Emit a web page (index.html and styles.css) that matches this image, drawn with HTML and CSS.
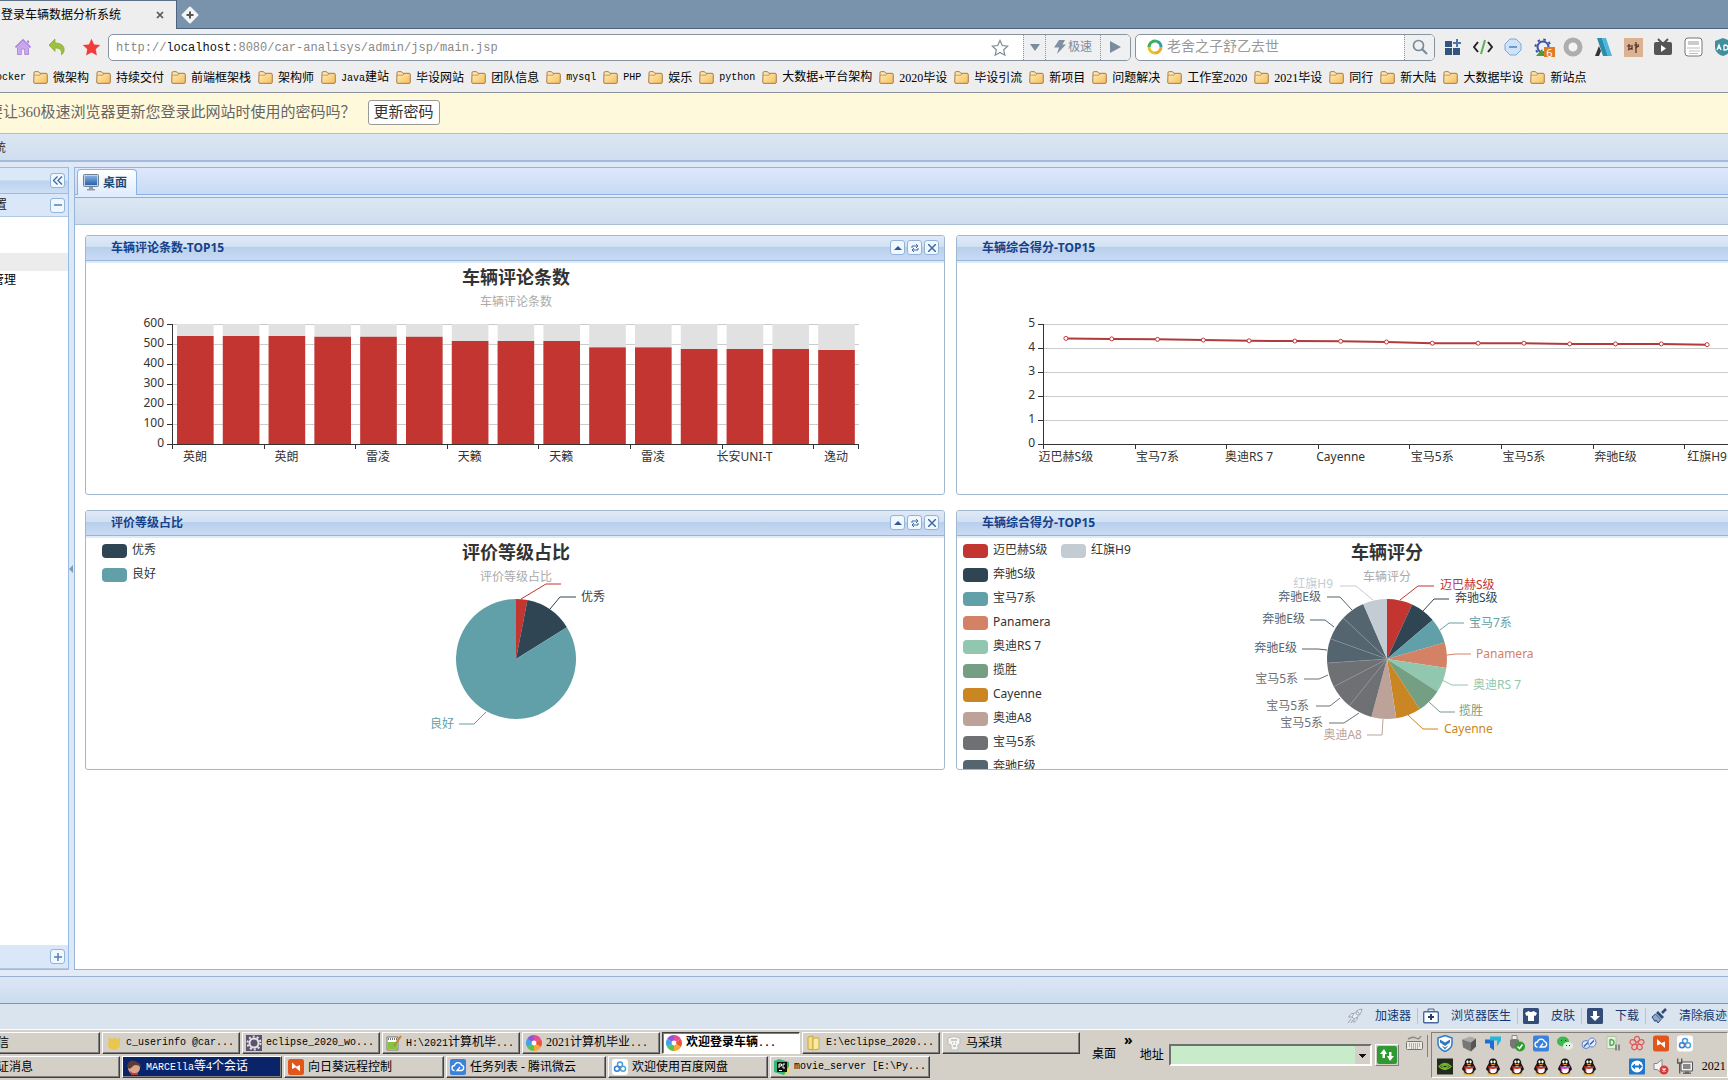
FILE: index.html
```html
<!DOCTYPE html>
<html lang="zh-CN">
<head>
<meta charset="utf-8">
<title>登录车辆数据分析系统</title>
<link rel="stylesheet" href="styles.css">
</head>
<body>
<svg class="defs" aria-hidden="true">
  <defs>
    <linearGradient id="gold" x1="0" y1="0" x2="1" y2="1"><stop offset="0" stop-color="#fff0c0"/><stop offset="1" stop-color="#f5bd5c"/></linearGradient>
    <linearGradient id="screen" x1="0" y1="0" x2="0" y2="1"><stop offset="0" stop-color="#7fb0e0"/><stop offset="1" stop-color="#2a62ac"/></linearGradient>
  </defs>
  <symbol id="folder" viewBox="0 0 16 14"><path d="M1 3V2q0-1.3 1.2-1.3h3.6L7.4 2.500H14q1.300 0 1.300 1.300v8.200q0 1.300-1.300 1.300H2q-1.300 0-1.300-1.300z" fill="url(#gold)" stroke="#a0713c"/><path d="M1 4.500h6.500L9 3" fill="none" stroke="#c89650"/></symbol>
  <symbol id="pinwheel" viewBox="0 0 16 16"><path d="M8 8V0a8 8 0 0 1 6.900 4z" fill="#e84d9a"/><path d="M8 8l6.900-4a8 8 0 0 1 0 8z" fill="#f0553c"/><path d="M8 8l6.900 4A8 8 0 0 1 8 16z" fill="#f7a63a"/><path d="M8 8v8a8 8 0 0 1-6.900-4z" fill="#5dc24b"/><path d="M8 8l-6.900 4a8 8 0 0 1 0-8z" fill="#3aa5e8"/><path d="M8 8L1.100 4A8 8 0 0 1 8 0z" fill="#8a5ad8"/><circle cx="8" cy="8" r="2.400" fill="#fff"/></symbol>
  <symbol id="qq" viewBox="0 0 16 18"><ellipse cx="8" cy="16.300" rx="6" ry="1.600" fill="#e9a21c"/><path d="M8 .5c3 0 4.500 2 4.500 5 0 1 2.800 4 2.800 7l-1.300.8c-1 3-3 3.500-6 3.500s-5-.5-6-3.500L.7 12.500c0-3 2.800-6 2.800-7 0-3 1.500-5 4.500-5z" fill="#161616"/><ellipse cx="8" cy="12.500" rx="4" ry="3.700" fill="#fff"/><ellipse cx="6.400" cy="4" rx="1.200" ry="1.700" fill="#fff"/><ellipse cx="9.600" cy="4" rx="1.200" ry="1.700" fill="#fff"/><path d="M5 6.300h6L8 8z" fill="#f0a020"/><path d="M2.800 8.200q5 2.500 10.400 0v2q-5 2-8 1v3H3.500v-3.500z" fill="var(--scarf,#d8282c)"/></symbol>
  <symbol id="cloud" viewBox="0 0 16 16"><rect width="16" height="16" rx="2" fill="#3c82dc"/><path d="M4.500 11.500a2.500 2.500 0 0 1 0-5 3.600 3.600 0 0 1 7-.3 2.700 2.700 0 0 1 0 5.300H7l3-3.500" fill="none" stroke="#fff" stroke-width="1.300"/></symbol>
  <symbol id="sun" viewBox="0 0 16 16"><rect width="16" height="16" rx="2.500" fill="#e2561c"/><path d="M4 3.500l4.500 4L12 6v6.500L7.500 8.500 4 10z" fill="#fff"/></symbol>
  <symbol id="netdisk" viewBox="0 0 16 16"><rect width="16" height="16" rx="3" fill="#fff"/><g fill="none" stroke-width="1.500"><circle cx="8" cy="5.500" r="2.500" stroke="#4a9be0"/><circle cx="5" cy="9.800" r="2.500" stroke="#2f7fd6"/><circle cx="11" cy="9.800" r="2.500" stroke="#4aa8d6"/></g><circle cx="8" cy="8.500" r="1" fill="#e2505a"/></symbol>
</svg>

<header class="browser">
  <div class="tabstrip">
    <div class="browser-tab"><span>登录车辆数据分析系统</span><button class="bare" aria-label="关闭标签"><svg width="8" height="8" viewBox="0 0 8 8"><path d="M1 1l6 6M7 1L1 7" stroke="#555" stroke-width="1.700"/></svg></button></div>
    <button class="bare new-tab" aria-label="新标签"><svg width="18" height="18" viewBox="0 0 18 18"><path d="M9 1.500L16.500 9 9 16.500 1.500 9z" fill="#f2f4f6" stroke="#f2f4f6" stroke-width="2" stroke-linejoin="round"/><path d="M9 5.500v7M5.500 9h7" stroke="#555" stroke-width="2"/></svg></button>
  </div>
  <div class="navbar">
    <div class="nav-icons">
      <button class="bare" aria-label="主页"><svg width="18" height="18" viewBox="0 0 18 18"><path d="M1.500 9.500L9 2l7.500 7.500" fill="none" stroke="#b087e0" stroke-width="1.800"/><path d="M3.500 10L9 4.500l5.500 5.500v6.500h-3.800V11H7.300v5.500H3.500z" fill="#c9a8ee" stroke="#a67cd8" stroke-width=".8"/><path d="M13 2.500h2v3l-2-1.500z" fill="#a67cd8"/></svg></button>
      <button class="bare" aria-label="后退"><svg width="18" height="18" viewBox="0 0 18 18"><path d="M7 1v4c6 0 10 3 9 8-.4 2-1.500 3-2.500 3.800C14 12 12 10 7 10v3.500L1 7z" fill="#9cc23c" stroke="#7fa62c" stroke-width=".7"/></svg></button>
      <button class="bare" aria-label="收藏夹"><svg width="19" height="18" viewBox="0 0 19 18"><path d="M9.500.8l2.600 5.600 6.100.7-4.500 4.200 1.200 6.100-5.400-3-5.400 3 1.200-6.100L.8 7.100l6.100-.7z" fill="#f23c3c"/></svg></button>
    </div>
    <div class="urlbox">
      <div class="url" role="textbox" aria-label="网址">http://<b>localhost</b>:8080/car-analisys/admin/jsp/main.jsp</div>
      <button class="bare fav" aria-label="加入收藏"><svg width="18" height="18" viewBox="0 0 18 18"><path d="M9 1.500l2.300 5 5.400.6-4 3.700 1.100 5.400L9 13.500l-4.800 2.700 1.100-5.400-4-3.700 5.400-.6z" fill="#fff" stroke="#7c8894" stroke-width="1.200"/></svg></button>
      <button class="seg seg-s" aria-label="历史"><svg width="10" height="8" viewBox="0 0 10 8"><path d="M0 1h10L5 8z" fill="#7b8c9e"/></svg></button>
      <button class="seg seg-m"><svg width="12" height="14" viewBox="0 0 12 14"><path d="M5 0h6L8.500 4.500H12L3 14l2-6.500H0z" fill="#8090a2"/></svg>极速</button>
      <button class="seg seg-g" aria-label="转到"><svg width="11" height="12" viewBox="0 0 11 12"><path d="M0 0l11 6-11 6z" fill="#7b8c9e"/></svg></button>
    </div>
    <div class="searchbox">
      <svg width="16" height="16" viewBox="0 0 16 16"><g fill="none" stroke-width="3"><path d="M2 8a6 6 0 0 1 8-5.600" stroke="#3fae54"/><path d="M10 2.400A6 6 0 0 1 14 8" stroke="#2f9fb0"/><path d="M14 8a6 6 0 0 1-6 6" stroke="#f4a62a"/><path d="M8 14a6 6 0 0 1-6-6" stroke="#e6c52c"/></g></svg>
      <input type="text" aria-label="搜索" placeholder="老舍之子舒乙去世">
      <button class="seg seg-q" aria-label="搜索"><svg width="16" height="16" viewBox="0 0 16 16"><circle cx="6.500" cy="6.500" r="5" fill="none" stroke="#7d8a98" stroke-width="1.700"/><path d="M10 10l5 5" stroke="#7d8a98" stroke-width="2.200"/></svg></button>
    </div>
    <div class="extensions">
      <svg width="18" height="18" viewBox="0 0 18 18"><path d="M1 3h7v6H1zM1 10h7v7H1zM9 10h7v7H9z" fill="#34557e"/><path d="M13 1v8M9 5h8" stroke="#4d75a8" stroke-width="2"/></svg>
      <svg width="20" height="18" viewBox="0 0 20 18"><path d="M5 4L1 9l4 5M15 4l4 5-4 5" fill="none" stroke="#222" stroke-width="2"/><path d="M12 2L8 16" stroke="#5eae5a" stroke-width="2"/></svg>
      <svg width="18" height="18" viewBox="0 0 18 18"><path d="M6 1h6l5 5v6l-5 5H6l-5-5V6z" fill="#cfe3f8" stroke="#7ba8dc"/><path d="M5 9h8" stroke="#7099cc" stroke-width="2"/></svg>
      <span class="badged"><svg width="18" height="18" viewBox="0 0 18 18"><circle cx="9" cy="9" r="5.500" fill="none" stroke="#3a53a4" stroke-width="2"/><circle cx="9" cy="9" r="7.500" fill="none" stroke="#3a53a4" stroke-width="2" stroke-dasharray="2.500 3.400"/><path d="M2 18l6-7 3 7z" fill="#4c9c3c"/></svg><span class="badge">6</span></span>
      <svg width="20" height="20" viewBox="0 0 20 20"><circle cx="10" cy="10" r="7" fill="#f4f4f4" stroke="#adadad" stroke-width="5"/></svg>
      <svg width="19" height="19" viewBox="0 0 19 19"><path d="M1 18l4-10 2 5-2 5z" fill="#333"/><path d="M3 0h5l6 18H9z" fill="#2d8ca8"/><path d="M8 0h4l6 18h-4z" fill="#4cb6de"/></svg>
      <svg width="19" height="19" viewBox="0 0 19 19"><path d="M0 0h19v19H0z" fill="#dcb392"/><path d="M3 8h4M5 6v6M4 12l4-2M8 7v5M12 4v11M10 7h5M11 10l4-2" stroke="#503020" stroke-width="1.200"/></svg>
      <svg width="20" height="18" viewBox="0 0 20 18"><path d="M5 1l4 4M15 1l-4 4" stroke="#555" stroke-width="2"/><rect x="1" y="4" width="18" height="13" rx="2" fill="#555"/><path d="M8 7l5 3.500L8 14z" fill="#fff"/></svg>
      <svg width="19" height="20" viewBox="0 0 19 20"><rect x="1" y="1" width="17" height="18" rx="3" fill="#fff" stroke="#777"/><path d="M4 5h11M4 7h11" stroke="#999"/><path d="M3 11h13M5 14h11M5 16.500h9" stroke="#bbb"/></svg>
      <svg width="18" height="18" viewBox="0 0 18 18"><path d="M9 0l8 3v6c0 5-4 8-8 9-4-1-8-4-8-9V3z" fill="#3f8f9c"/><path d="M3 12l2-5 2 5M4 10h2M10 7v5q4 0 4-2.500T10 7" fill="none" stroke="#fff" stroke-width="1.300"/></svg>
    </div>
  </div>
  <nav class="bookmarks" aria-label="书签">
    <a href="#"><span class="lat">ocker</span></a>
    <a href="#"><svg><use href="#folder"/></svg>微架构</a>
    <a href="#"><svg><use href="#folder"/></svg>持续交付</a>
    <a href="#"><svg><use href="#folder"/></svg>前端框架栈</a>
    <a href="#"><svg><use href="#folder"/></svg>架构师</a>
    <a href="#"><svg><use href="#folder"/></svg><span><span class="lat">Java</span>建站</span></a>
    <a href="#"><svg><use href="#folder"/></svg>毕设网站</a>
    <a href="#"><svg><use href="#folder"/></svg>团队信息</a>
    <a href="#"><svg><use href="#folder"/></svg><span class="lat">mysql</span></a>
    <a href="#"><svg><use href="#folder"/></svg><span class="lat">PHP</span></a>
    <a href="#"><svg><use href="#folder"/></svg>娱乐</a>
    <a href="#"><svg><use href="#folder"/></svg><span class="lat">python</span></a>
    <a href="#"><svg><use href="#folder"/></svg><span>大数据<span class="lat">+</span>平台架构</span></a>
    <a href="#"><svg><use href="#folder"/></svg>2020毕设</a>
    <a href="#"><svg><use href="#folder"/></svg>毕设引流</a>
    <a href="#"><svg><use href="#folder"/></svg>新项目</a>
    <a href="#"><svg><use href="#folder"/></svg>问题解决</a>
    <a href="#"><svg><use href="#folder"/></svg>工作室2020</a>
    <a href="#"><svg><use href="#folder"/></svg>2021毕设</a>
    <a href="#"><svg><use href="#folder"/></svg>同行</a>
    <a href="#"><svg><use href="#folder"/></svg>新大陆</a>
    <a href="#"><svg><use href="#folder"/></svg>大数据毕设</a>
    <a href="#"><svg><use href="#folder"/></svg>新站点</a>
  </nav>
  <div class="infobar"><span>要让360极速浏览器更新您登录此网站时使用的密码吗？</span><button>更新密码</button></div>
</header>

<div class="app-header"><span>统</span></div>
<main class="workspace">
  <aside class="sidebar">
    <div class="side-title"><button class="tool" aria-label="收起"><svg width="10" height="9" viewBox="0 0 10 9"><path d="M4.500.5l-4 4 4 4M9 .5l-4 4 4 4" fill="none" stroke="#3f6ba5" stroke-width="1.300"/></svg></button></div>
    <div class="side-section"><span>置</span><button class="tool" aria-label="折叠"><svg width="8" height="8" viewBox="0 0 8 8"><path d="M0 4h8" stroke="#5680b5" stroke-width="1.500"/></svg></button></div>
    <ul class="tree"><li class="selected"></li><li>管理</li></ul>
    <div class="side-section side-foot"><button class="tool" aria-label="展开"><svg width="8" height="8" viewBox="0 0 8 8"><path d="M0 4h8M4 0v8" stroke="#5680b5" stroke-width="1.500"/></svg></button></div>
  </aside>
  <div class="splitter"><svg width="4" height="8" viewBox="0 0 4 8"><path d="M4 0v8L0 4z" fill="#7d9cba"/></svg></div>
  <section class="content">
    <div class="content-tabs"><button class="content-tab"><svg width="16" height="17" viewBox="0 0 16 17"><rect x=".5" y=".5" width="15" height="12" rx="1" fill="#c9d2dc" stroke="#6f7f92"/><path d="M2 2h12v9H2z" fill="url(#screen)"/><path d="M6 13h4v2h2v1.500H4V15h2z" fill="#8f9aa8"/></svg>桌面</button></div>
    <div class="content-toolbar"></div>
    <div class="portal">
      <article class="panel"><h2><span>车辆评论条数-TOP15</span></h2><div class="chart" id="bar"></div></article>
      <article class="panel"><h2><span>车辆综合得分-TOP15</span></h2><div class="chart" id="line"></div></article>
      <article class="panel"><h2><span>评价等级占比</span></h2><div class="chart" id="grade"></div></article>
      <article class="panel"><h2><span>车辆综合得分-TOP15</span></h2><div class="chart" id="score"></div></article>
    </div>
  </section>
</main>
<div class="app-footer"></div>

<footer class="statusbar">
  <a href="#"><svg width="16" height="16" viewBox="0 0 16 16"><path d="M5 9Q8 2 15 1q-1 7-8 10zM5 9L1.500 9l3-3.500L7 5.500M7 11v3.500l3-3 .5-2.500M4 11l-3 4M6 12l-2 3" fill="#eceff2" stroke="#9aa4b0"/><circle cx="10.500" cy="5.500" r="1.500" fill="none" stroke="#9aa4b0"/></svg>加速器</a>
  <a href="#"><svg width="16" height="16" viewBox="0 0 16 16"><rect x=".7" y="3.700" width="14.600" height="11" rx="1" fill="#fff" stroke="#48689c" stroke-width="1.400"/><path d="M5 3.500V1h6v2.500" fill="none" stroke="#48689c"/><path d="M8 6v6M5 9h6" stroke="#263e68" stroke-width="2"/></svg>浏览器医生</a>
  <a href="#"><svg width="16" height="16" viewBox="0 0 16 16"><rect width="16" height="16" rx="1.500" fill="#344c78"/><path d="M5.500 3Q8 5 10.500 3L14 5l-1.500 3L11 7.500V13H5V7.500L3.500 8 2 5z" fill="#fff"/></svg>皮肤</a>
  <a href="#"><svg width="16" height="16" viewBox="0 0 16 16"><rect width="16" height="16" rx="1.500" fill="#344c78"/><path d="M6 3h4v5h3l-5 5-5-5h3z" fill="#fff"/></svg>下载</a>
  <a href="#"><svg width="16" height="16" viewBox="0 0 16 16"><path d="M15 1l-4 4" stroke="#304a78" stroke-width="2.500"/><path d="M7 3l6 6-2 2-6-6z" fill="#304a78"/><path d="M4.500 6L10 11.500 7 15 5 12l-1 1.500L1 9z" fill="#8fa8cc" stroke="#304a78"/></svg>清除痕迹</a>
</footer>

<footer class="taskbar">
  <div class="tasks">
    <div class="task-row">
      <button class="task first"><span>信</span></button>
      <button class="task"><svg viewBox="0 0 16 16"><path d="M3 2l3 2 3-2 2 2 3-1v8q-2 4-6 4t-6-4z" fill="#ecc53a" opacity=".85"/></svg><span class="lat">c_userinfo @car...</span></button>
      <button class="task"><svg viewBox="0 0 16 16"><path d="M0 0h16v16H0z" fill="#5b5470"/><circle cx="8" cy="8" r="4.500" fill="#5b5470" stroke="#e4e4e4" stroke-width="2"/><circle cx="8" cy="8" r="6.500" fill="none" stroke="#e4e4e4" stroke-width="2" stroke-dasharray="2 2.080"/></svg><span class="lat">eclipse_2020_wo...</span></button>
      <button class="task"><svg viewBox="0 0 16 16"><path d="M1 2h11v13H1z" fill="#fff" stroke="#777"/><path d="M1.500 7h10v7.500h-10z" fill="#85c440"/><path d="M2 4h9" stroke="#777" stroke-dasharray="1 1" stroke-width="2"/><path d="M15 1L8 11" stroke="#c48428" stroke-width="2"/></svg><span><span class="lat">H:\2021</span>计算机毕<span class="lat">...</span></span></button>
      <button class="task"><svg><use href="#pinwheel"/></svg><span>2021计算机毕业<span class="lat">...</span></span></button>
      <button class="task pressed"><svg><use href="#pinwheel"/></svg><span>欢迎登录车辆<span class="lat">...</span></span></button>
      <button class="task"><svg viewBox="0 0 16 16"><path d="M2 2l5-1v14l-5-1z" fill="#f4df86" stroke="#c9a840"/><path d="M7 3h6v11l-6 1z" fill="#f8eaa6" stroke="#c9a840"/></svg><span class="lat">E:\eclipse_2020...</span></button>
      <button class="task"><svg viewBox="0 0 16 16"><path d="M2 3q6-3 12 0v6l-2 1v5H5v-5L2 9z" fill="#f4f4f2" stroke="#bbb"/><path d="M5 5h6M6 8h1M9 8h1M7 11h3" stroke="#999"/></svg><span>马采琪</span></button>
    </div>
    <div class="task-row wide">
      <button class="task first"><span>证消息</span></button>
      <button class="task active"><svg viewBox="0 0 16 16"><circle cx="8" cy="9" r="6" fill="#d9a38c"/><path d="M1 7Q3 0 9 2t6 6Q9 4 6 8t-5-1z" fill="#5a3c34"/><path d="M4 12q4 4 8 1v3H5z" fill="#b83c3c"/></svg><span><span class="lat">MARCElla</span>等4个会话</span></button>
      <button class="task"><svg><use href="#sun"/></svg><span>向日葵远程控制</span></button>
      <button class="task"><svg><use href="#cloud"/></svg><span>任务列表 - 腾讯微云</span></button>
      <button class="task"><svg><use href="#netdisk"/></svg><span>欢迎使用百度网盘</span></button>
      <button class="task"><svg viewBox="0 0 16 16"><path d="M0 2l5-2 10 3v10l-5 3L0 13z" fill="#34b878"/><path d="M10 16l6-3-1-6z" fill="#e8e04c"/><path d="M3 3h10v10H3z" fill="#111"/><path d="M5 5v4M5 5h2.500v2H5M11 5H9v4h2M5 11.500h3" stroke="#fff" fill="none"/></svg><span class="lat">movie_server [E:\Py...</span></button>
    </div>
  </div>
  <div class="deskbar"><span>桌面</span><span class="more">»</span></div>
  <label class="address"><span>地址</span><select><option></option></select></label>
  <button class="go" aria-label="刷新"><svg width="20" height="18" viewBox="0 0 20 18"><rect width="20" height="18" rx="2" fill="#2f9a34"/><path d="M7 3L3 8h2.500v4h2.500V8H10L7 3zM13 15l4-5h-2.500V6H12v4H10z" fill="#fff"/></svg></button>
  <div class="keyboard"><svg width="17" height="16" viewBox="0 0 17 16"><path d="M2 4q5-3 8-1t5-2" fill="none" stroke="#8d8a84" stroke-width="1.500"/><rect x=".5" y="6.500" width="16" height="8" rx="1" fill="#eceae4" stroke="#77746e"/><path d="M3 9h11M3 11h11M5 13h7" stroke="#77746e" stroke-dasharray="1 1"/></svg></div>
  <div class="tray">
    <div class="tray-row">
      <svg viewBox="0 0 16 16"><path d="M8 0l7 2.500V8q0 5-7 8-7-3-7-8V2.500z" fill="#fff" stroke="#2f7ac4" stroke-width="1.500"/><path d="M3 4l5 3 5-3v3l-5 3.500L3 7zM4.500 10L8 12l3.500-2L8 14z" fill="#2f7ac4"/></svg>
      <svg viewBox="0 0 16 16"><path d="M1 4l8-3 6 2-5 4z" fill="#aaa"/><path d="M1 4l9 3v9l-8-4z" fill="#777"/><path d="M10 7l5-4v8l-5 5z" fill="#555"/></svg>
      <svg viewBox="0 0 16 16"><path d="M0 4h9v11l-4-3V8H0z" fill="#1c6ed0"/><path d="M5 1h11v4l-4 6V5H5z" fill="#25b6dc"/></svg>
      <svg viewBox="0 0 16 16"><path d="M3 0h5v4H3z" fill="#eee" stroke="#888"/><path d="M1 4h9v6l-2 3H3l-2-3z" fill="#777"/><circle cx="11" cy="11" r="5" fill="#2f9c2c"/><path d="M8.500 11l2 2 3-4" stroke="#fff" stroke-width="1.500" fill="none"/></svg>
      <svg><use href="#cloud"/></svg>
      <svg viewBox="0 0 16 16"><ellipse cx="6" cy="6" rx="6" ry="5" fill="#3cb84c"/><ellipse cx="11" cy="10.500" rx="5" ry="4" fill="#e6efe4"/><path d="M4 5h1M8 5h1M9 10h1M12 10h1" stroke="#333"/></svg>
      <svg viewBox="0 0 16 16"><ellipse cx="5" cy="9" rx="4" ry="4" fill="#dce8fa" stroke="#5a82c8"/><ellipse cx="11" cy="7" rx="4" ry="4.500" fill="#e6eefc" stroke="#5a82c8"/><path d="M3 11l4-4M9 9l4-4" stroke="#3a62b0" stroke-width="1.500"/></svg>
      <svg viewBox="0 0 16 16"><path d="M2 1h9v12H2z" fill="#e6f0e0" stroke="#a8c8a0"/><path d="M5 4v6M5 4q4 0 4 3t-4 3" fill="none" stroke="#58a858" stroke-width="1.500"/><path d="M11 9v6M14 9v6" stroke="#888" stroke-width="2"/></svg>
      <svg viewBox="0 0 16 16"><g fill="none" stroke="#e05858" stroke-width="1.200"><ellipse cx="8" cy="3.800" rx="2.500" ry="3"/><ellipse cx="8" cy="3.800" rx="2.500" ry="3" transform="rotate(72 8 8)"/><ellipse cx="8" cy="3.800" rx="2.500" ry="3" transform="rotate(144 8 8)"/><ellipse cx="8" cy="3.800" rx="2.500" ry="3" transform="rotate(216 8 8)"/><ellipse cx="8" cy="3.800" rx="2.500" ry="3" transform="rotate(288 8 8)"/></g></svg>
      <svg><use href="#sun"/></svg>
      <svg><use href="#netdisk"/></svg>
    </div>
    <div class="tray-row">
      <svg viewBox="0 0 16 16"><path d="M0 0h16v16H0z" fill="#222c1c"/><path d="M2 8q6-6 12 0-6 6-12 0zM5 8q3-3 6 0-3 3-6 0z" fill="none" stroke="#76b82c" stroke-width="1.300"/></svg>
      <svg><use href="#qq"/></svg><svg><use href="#qq"/></svg><svg><use href="#qq"/></svg><svg><use href="#qq"/></svg><svg class="pink"><use href="#qq"/></svg><svg><use href="#qq"/></svg>
      <svg></svg>
      <svg viewBox="0 0 16 16"><rect width="16" height="16" rx="1" fill="#1c78cc"/><circle cx="8" cy="8" r="6" fill="#fff"/><path d="M2.500 8l3.500-3v2h4V5l3.500 3-3.500 3V9H6v2z" fill="#1c78cc"/></svg>
      <svg viewBox="0 0 16 16"><path d="M1 5h3l5-4v14l-5-4H1z" fill="#f4f4f4" stroke="#888"/><circle cx="11" cy="11.500" r="4.500" fill="#d83c38"/><path d="M9.500 10l3 3M12.500 10l-3 3" stroke="#fff" stroke-width="1.300"/></svg>
      <svg viewBox="0 0 16 16"><path d="M4 3.500h11.500v9H4z" fill="#f0f0ee" stroke="#555"/><path d="M6 5.500h7.500v5H6z" fill="#888"/><path d="M8 13h4v1h2v1.500H6V14h2z" fill="#666"/><path d="M.7 0v4.500h4V0M2.700 4.500V15" fill="none" stroke="#555" stroke-width="1.300"/></svg>
      <time>2021</time>
    </div>
  </div>
</footer>
<script src="charts.js"></script>
</body>
</html>
```

FILE: styles.css
```css
* { box-sizing: border-box; }
body {
  margin: 0;
  min-height: 100vh;
  display: flex;
  flex-direction: column;
  overflow: hidden;
  background: #dfe8f6;
  color: #000;
  font: 12px/16px "Liberation Serif", "Noto Sans CJK SC", sans-serif;
  white-space: nowrap;
}
button, input, select { font: inherit; color: inherit; margin: 0; padding: 0; }
svg { display: block; flex: none; }
a { color: inherit; text-decoration: none; }
.defs { width: 0; height: 0; position: absolute; }
.bare { border: 0; background: none; display: flex; }
.lat { font-family: "Liberation Mono", monospace; font-size: 10px; }

/* browser chrome */
.browser { background: #eee; }
.tabstrip { display: flex; height: 29px; background: #7893ab; border-bottom: 1px solid #4d6380; }
.browser-tab { width: 177px; height: 29px; padding: 0 12px 0 1px; display: flex; align-items: center; justify-content: space-between; background: #eee; border-top: 1px solid #5c7088; border-right: 1px solid #4d6380; }
.new-tab { padding: 6px 4px; }
.navbar { display: flex; align-items: center; height: 36px; }
.nav-icons { display: flex; gap: 16px; width: 108px; padding-left: 14px; flex: none; }
.urlbox, .searchbox { display: flex; align-items: stretch; height: 27px; border: 1px solid #8593a2; border-radius: 5px; background: #fff; overflow: hidden; }
.urlbox { flex: 1; margin-right: 4px; }
.url { flex: 1; padding-left: 7px; color: #888; font: 12px/27px "Liberation Mono", monospace; }
.url b { color: #111; font-weight: 400; }
.fav { padding: 4px 14px 0 0; }
.seg { display: flex; align-items: center; justify-content: center; gap: 2px; border: 0; border-left: 1px dotted #8593a2; background: #eef0f2; color: #7b8c9e; }
.seg-s { width: 22px; }
.seg-m { width: 55px; }
.seg-g, .seg-q { width: 30px; }
.searchbox { width: 300px; flex: none; align-items: center; padding-left: 11px; }
.searchbox .seg { align-self: stretch; }
.searchbox input { flex: 1; min-width: 0; height: 25px; border: 0; padding-left: 4px; font-size: 14px; background: none; }
.searchbox input::placeholder { color: #999; opacity: 1; }
.extensions { flex: none; width: 293px; padding-left: 3px; display: grid; grid-template-columns: repeat(10, 30px); justify-items: center; align-items: center; overflow: hidden; }
.badged { position: relative; }
.badge { position: absolute; left: 10px; top: 9px; width: 11px; height: 12px; background: #e07c24; color: #fff; font: 11px/12px "Noto Sans", sans-serif; text-align: center; }
.bookmarks { display: flex; align-items: center; gap: 7px; height: 28px; margin-left: -4px; border-bottom: 1px solid #8b9299; overflow: hidden; padding-bottom: 2px; }
.bookmarks a { display: flex; align-items: center; gap: 5px; flex: none; }
.bookmarks svg { width: 15px; height: 13px; }
.infobar { display: flex; align-items: center; gap: 12px; height: 40px; padding-bottom: 2px; background: #fff9dc; color: #666; font-size: 15px; line-height: 20px; }
.infobar span { margin-left: -12px; }
.infobar button { height: 25px; padding: 0 5px; border: 1px solid #999; border-radius: 3px; background: #fff; color: #333; line-height: 20px; }

/* application frame */
.app-header { height: 29px; border-top: 1px solid #a9bfd3; border-bottom: 2px solid #a3bad9; background: linear-gradient(#dbe6f2, #cfdef0); padding: 6px 0; overflow: hidden; }
.app-header span { margin-left: -6px; color: #333; }
.workspace { flex: 1; display: flex; padding-top: 5px; min-height: 0; background: #dfe8f6; }
.sidebar { width: 69px; display: flex; flex-direction: column; border: 1px solid #99bbe8; border-left: 0; background: #fff; overflow: hidden; }
.side-title { display: flex; align-items: center; justify-content: flex-end; height: 26px; padding-right: 3px; border-bottom: 1px solid #99bbe8; background: linear-gradient(#dbe8f7 0 48%, #bcd2ee 52%, #cddff5); }
.side-section { display: flex; align-items: center; justify-content: space-between; height: 23px; padding-right: 3px; border-bottom: 1px solid #b3c9e3; background: #d9e7f8; }
.side-section span { margin-left: -5px; color: #222; }
.side-foot { justify-content: flex-end; height: 24px; }
.tool { width: 15px; height: 15px; display: flex; align-items: center; justify-content: center; border: 1px solid #94b3d8; border-radius: 3px; background: #f0f7ff; }
.tree { flex: 1; margin: 0; padding: 36px 0 0; list-style: none; }
.tree li { height: 18px; line-height: 18px; margin-left: -8px; }
.tree .selected { background: #ececec; }
.splitter { width: 5px; display: flex; align-items: center; background: #dbe9f7; }
.content { flex: 1; min-width: 0; border: 1px solid #99b4d6; border-right: 0; background: #fff; overflow: hidden; }
.content-tabs { height: 29px; padding: 1px 2px 0; background: linear-gradient(#dde8fb, #c9daf4 26px, #8db2e3 26px, #8db2e3 27px, #deecfd 27px); }
.content-tab { width: 60px; height: 26px; display: flex; align-items: center; gap: 4px; padding: 0 5px; border: 1px solid #8db2e3; border-bottom: 0; border-radius: 4px 4px 0 0; background: linear-gradient(#fff, #deecfd); color: #1c4a78; font-weight: 700; }
.content-toolbar { height: 28px; border-top: 1px solid #92afcf; border-bottom: 1px solid #a9bfd3; background: linear-gradient(#dce7f3, #cddcee); }
.portal { display: grid; grid-template-columns: 1fr 1fr; gap: 15px 11px; width: calc(100% + 88px); padding: 10px 0 0 10px; }
.panel { min-width: 0; height: 260px; display: flex; flex-direction: column; border: 1px solid #a2b8cf; border-radius: 3px; overflow: hidden; }
.panel h2 { margin: 0; flex: none; height: 27px; display: flex; align-items: center; justify-content: space-between; padding: 0 5px 2px 25px; border-bottom: 2px solid #dfebf9; box-shadow: inset 0 -1px #99b4d6; background: linear-gradient(#dfeaf7, #d0e0f3 44%, #b8cfec 46%, #cbdcf4); color: #15428b; font: 700 12px/16px "Noto Sans", "Noto Sans CJK SC", sans-serif; }
.panel-tools { display: flex; gap: 2px; }
.chart { flex: 1; min-height: 0; overflow: hidden; }
.chart svg { margin: 0 auto; }
.chart text { font-family: "Noto Sans", "Noto Sans CJK SC", sans-serif; font-size: 12px; fill: #333; }
.chart .title { font-size: 18px; font-weight: 700; }
.chart .subtitle { fill: #aaa; }
.app-footer { height: 34px; border-bottom: 1px solid #7f93b2; background: linear-gradient(#e3ecf6 6px, #99b0cf 6px, #99b0cf 7px, #dce7f5 7px, #cbdcef); }

/* browser status bar */
.statusbar { display: flex; justify-content: flex-end; align-items: center; height: 25px; padding-bottom: 2px; background: #d9e4ee; color: #17366e; }
.statusbar a { display: flex; align-items: center; gap: 12px; padding: 0 6px 0 5px; }
.statusbar a + a { border-left: 1px solid #b5c3d2; }
.statusbar a:last-child { padding-right: 1px; }

/* desktop task bar */
.taskbar { display: flex; height: 51px; padding-top: 2px; border-top: 1px solid #fff; background: #d4d0c8; overflow: hidden; }
.tasks { width: 1080px; flex: none; display: flex; flex-direction: column; gap: 2px; }
.task-row { display: flex; gap: 2px; }
.task { width: 138px; height: 22px; flex: none; display: flex; align-items: center; gap: 4px; padding: 0 3px; overflow: hidden; border: 1px solid; border-color: #fff #404040 #404040 #fff; box-shadow: inset -1px -1px #808080; background: #d4d0c8; }
.task svg { width: 16px; height: 16px; }
.wide .task { width: 160px; }
.task-row .first { width: 100px; padding: 0; border-left: 0; }
.wide .first { width: 120px; }
.first span { margin-left: -3px; }
.task.pressed { border-color: #404040 #fff #fff #404040; box-shadow: inset 1px 1px #808080; background: #fff; font-weight: 700; }
.task.active { background: #0a246a; color: #fff; }
.deskbar { display: flex; padding: 14px 0 0 12px; }
.more { font: 700 14px/16px "Noto Sans", sans-serif; margin: -14px 0 0 8px; }
.address { display: flex; gap: 5px; margin-left: 7px; padding-top: 12px; }
.address span { padding-top: 3px; }
.address select { width: 203px; height: 22px; appearance: none; border: 2px solid; border-color: #707070 #fff #fff #707070; border-radius: 0; background: linear-gradient(#111, #111) right 4px top 8px / 7px 1px no-repeat, linear-gradient(#111, #111) right 5px top 9px / 5px 1px no-repeat, linear-gradient(#111, #111) right 6px top 10px / 3px 1px no-repeat, linear-gradient(#111, #111) right 7px top 11px / 1px 1px no-repeat, linear-gradient(#d4d0c8, #d4d0c8) right / 15px 100% no-repeat, #c8ebca; }
.go { height: 22px; margin: 12px 0 0 3px; padding: 1px; border: 1px solid; border-color: #fff #808080 #808080 #fff; background: #d4d0c8; }
.keyboard { margin: 3px 0 0 7px; height: 22px; padding-right: 4px; border-right: 1px solid #808080; }
.tray { flex: 1; min-width: 0; height: 46px; margin-left: 3px; padding: 2px 0 0 5px; display: flex; flex-direction: column; gap: 6px; border: 1px solid; border-color: #808080 #fff #fff #808080; overflow: hidden; }
.tray-row { display: flex; gap: 8px; }
.tray svg { width: 16px; height: 17px; }
.tray time { margin-left: 1px; }
.pink { --scarf: #e838c8; }
```

FILE: charts.js
```js
const NS = 'http://www.w3.org/2000/svg';
const W = 860, H = 232, LEFT = 86, RIGHT = 773, TOP = 61, BASE = 181, N = 15;
const STEP = (RIGHT - LEFT) / N;

function canvas(id) {
  const svg = document.createElementNS(NS, 'svg');
  svg.setAttribute('width', W);
  svg.setAttribute('height', H);
  document.getElementById(id).append(svg);
  return svg;
}
function add(svg, name, attrs, text) {
  const el = document.createElementNS(NS, name);
  for (const key in attrs) el.setAttribute(key, attrs[key]);
  if (text !== undefined) el.textContent = text;
  svg.append(el);
}
function label(svg, x, y, text, anchor = 'middle', fill) {
  add(svg, 'text', { x, y: y + 4, 'text-anchor': anchor, ...(fill && { style: `fill:${fill}` }) }, text);
}
function heading(svg, title, subtitle) {
  add(svg, 'text', { x: 430, y: 21, 'text-anchor': 'middle', class: 'title' }, title);
  add(svg, 'text', { x: 430, y: 43, 'text-anchor': 'middle', class: 'subtitle' }, subtitle);
}
function rule(svg, x1, y1, x2, y2, stroke) {
  add(svg, 'path', { d: `M${x1} ${y1}L${x2} ${y2}`, stroke, 'shape-rendering': 'crispEdges' });
}
function gridLines(svg, max, unit) {
  for (let v = unit; v <= max; v += unit) {
    const y = BASE - (BASE - TOP) * v / max + 0.5;
    rule(svg, LEFT, y, RIGHT, y, '#ccc');
  }
}
function axes(svg, max, unit, names) {
  for (let v = 0; v <= max; v += unit) {
    const y = BASE - (BASE - TOP) * v / max;
    rule(svg, LEFT - 5, y + 0.5, LEFT, y + 0.5, '#333');
    label(svg, LEFT - 8, y - 1, v, 'end');
  }
  rule(svg, LEFT + 0.5, TOP, LEFT + 0.5, BASE, '#333');
  rule(svg, LEFT, BASE + 0.5, RIGHT, BASE + 0.5, '#333');
  names.forEach((name, i) => {
    const x = Math.round(LEFT + i * 2 * STEP) + 0.5;
    rule(svg, x, BASE, x, BASE + 5, '#333');
    label(svg, LEFT + (i * 2 + 0.5) * STEP, BASE + 13, name);
  });
  rule(svg, RIGHT - 0.5, BASE, RIGHT - 0.5, BASE + 5, '#333');
}
function pie(svg, slices) {
  const total = slices.reduce((sum, s) => sum + s.value, 0);
  const point = a => `${430 + 60 * Math.sin(a)} ${121 - 60 * Math.cos(a)}`;
  let from = 0;
  for (const s of slices) {
    const to = from + s.value / total * 2 * Math.PI;
    add(svg, 'path', { d: `M430 121L${point(from)}A60 60 0 ${to - from > Math.PI ? 1 : 0} 1 ${point(to)}Z`, fill: s.color });
    if (s.hairline) add(svg, 'path', { d: `M430 121L${point(from)}`, stroke: '#8d979e', 'stroke-width': 0.5 });
    from = to;
    add(svg, 'polyline', { points: s.line, fill: 'none', stroke: s.color });
    if (s.name) label(svg, s.at[0], s.at[1] - 1, s.name, s.at[0] > 430 ? 'start' : 'end', s.color);
  }
}
function legend(svg, x, row, name, color) {
  add(svg, 'rect', { x, y: 6 + row * 24, width: 25, height: 14, rx: 4, fill: color });
  label(svg, x + 30, 12 + row * 24, name, 'start');
}

const bar = canvas('bar');
heading(bar, '车辆评论条数', '车辆评论条数');
gridLines(bar, 600, 100);
[540, 540, 540, 536, 536, 536, 515, 515, 515, 483, 483, 475, 475, 475, 470].forEach((v, i) => {
  const x = LEFT + i * STEP + 5, h = (BASE - TOP) * v / 600;
  add(bar, 'rect', { x, y: TOP, width: 36.6, height: BASE - TOP, fill: '#e1e1e1' });
  add(bar, 'rect', { x, y: BASE - h, width: 36.6, height: h, fill: '#c23531' });
});
axes(bar, 600, 100, ['英朗', '英朗', '雷凌', '天籁', '天籁', '雷凌', '长安UNI-T', '逸动']);

const line = canvas('line');
gridLines(line, 5, 1);
axes(line, 5, 1, ['迈巴赫S级', '宝马7系', '奥迪RS 7', 'Cayenne', '宝马5系', '宝马5系', '奔驰E级', '红旗H9']);
const points = [4.4, 4.38, 4.36, 4.33, 4.3, 4.29, 4.28, 4.25, 4.2, 4.2, 4.2, 4.17, 4.17, 4.17, 4.14]
  .map((v, i) => [LEFT + (i + 0.5) * STEP, BASE - v * 24]);
add(line, 'polyline', { points: points.join(' '), fill: 'none', stroke: '#b03a3e', 'stroke-width': 2 });
points.forEach(([cx, cy]) => add(line, 'circle', { cx, cy, r: 2, fill: '#fff', stroke: '#c23531' }));

const grade = canvas('grade');
heading(grade, '评价等级占比', '评价等级占比');
pie(grade, [
  { value: 11, color: '#c23531', line: '435,61 460,46 475,46' },
  { value: 47, color: '#2f4554', name: '优秀', at: [495, 60], line: '464,71 474,59 490,59' },
  { value: 302, color: '#61a0a8', name: '良好', at: [368, 187], line: '400,174 388,186 373,186' },
]);
legend(grade, 16, 0, '优秀', '#2f4554');
legend(grade, 16, 1, '良好', '#61a0a8');

const score = canvas('score');
heading(score, '车辆评分', '车辆评分');
pie(score, [
  { value: 4.4, color: '#c23531', name: '迈巴赫S级', at: [483, 48], line: '443,62 461,48 477,48' },
  { value: 4.38, color: '#2f4554', name: '奔驰S级', at: [498, 61], line: '466,73 477,61 492,61' },
  { value: 4.36, color: '#61a0a8', name: '宝马7系', at: [512, 86], line: '483,92 492,85 507,85' },
  { value: 4.33, color: '#d48265', name: 'Panamera', at: [519, 117], line: '490,117 499,116 514,116' },
  { value: 4.3, color: '#91c7ae', name: '奥迪RS 7', at: [516, 148], line: '485,142 495,147 511,147' },
  { value: 4.29, color: '#749f83', name: '揽胜', at: [502, 174], line: '472,164 483,174 498,174' },
  { value: 4.28, color: '#ca8622', name: 'Cayenne', at: [487, 192], line: '451,177 466,191 481,191' },
  { value: 4.25, color: '#bda29a', name: '奥迪A8', at: [405, 198], line: '426,181 425,197 410,197' },
  { value: 4.2, color: '#6e7074', name: '宝马5系', at: [366, 186], line: '402,175 387,185 372,185' },
  { value: 4.2, color: '#6e7074', name: '宝马5系', at: [352, 169], line: '383,160 373,168 359,168', hairline: true },
  { value: 4.2, color: '#6e7074', name: '宝马5系', at: [341, 142], line: '371,137 362,141 347,141', hairline: true },
  { value: 4.17, color: '#546570', name: '奔驰E级', at: [340, 111], line: '370,112 361,111 345,111', hairline: true },
  { value: 4.17, color: '#546570', name: '奔驰E级', at: [348, 82], line: '377,89 368,82 353,82', hairline: true },
  { value: 4.17, color: '#546570', name: '奔驰E级', at: [364, 60], line: '395,72 383,59 370,59', hairline: true },
  { value: 4.14, color: '#c4ccd3', name: '红旗H9', at: [376, 47], line: '416,62 399,48 383,48' },
]);
[['迈巴赫S级', '#c23531'], ['奔驰S级', '#2f4554'], ['宝马7系', '#61a0a8'], ['Panamera', '#d48265'], ['奥迪RS 7', '#91c7ae'],
 ['揽胜', '#749f83'], ['Cayenne', '#ca8622'], ['奥迪A8', '#bda29a'], ['宝马5系', '#6e7074'], ['奔驰E级', '#546570']]
  .forEach(([name, color], row) => legend(score, 6, row, name, color));
legend(score, 104, 0, '红旗H9', '#c4ccd3');

const tools = [
  ['收起', '<path d="M0 6h8L4 2z" fill="#2f5a94"/>'],
  ['刷新', '<path d="M1 4V2h5M5 0l2 2-2 2M7 4v2H2M3 4L1 6l2 2" fill="none" stroke="#3f6ba5"/>'],
  ['关闭', '<path d="M0 0l8 8M8 0L0 8" stroke="#3f6ba5" stroke-width="1.500"/>'],
];
document.querySelectorAll('.panel h2').forEach(h2 => {
  h2.insertAdjacentHTML('beforeend', '<div class="panel-tools">' + tools.map(([name, art]) =>
    `<button class="tool" aria-label="${name}"><svg width="8" height="8" viewBox="0 0 8 8">${art}</svg></button>`).join('') + '</div>');
});
```
